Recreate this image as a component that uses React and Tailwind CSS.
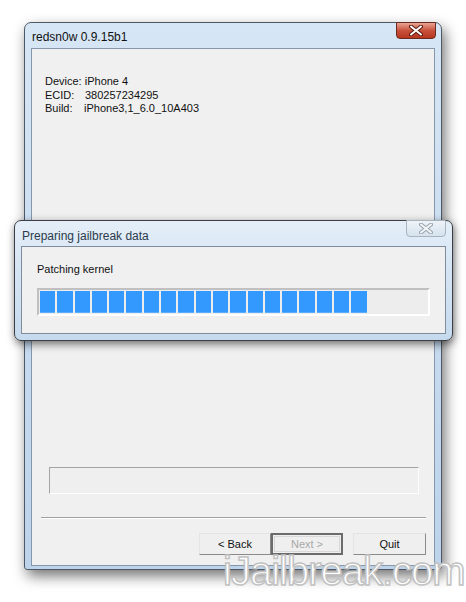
const blocks = Array.from({ length: 19 });

function CloseGlyph({ color, stroke }) {
  return (
    <svg width="14" height="11" viewBox="0 0 14 11">
      <path
        d="M2 1.5 L12 9.5 M12 1.5 L2 9.5"
        stroke={stroke}
        strokeWidth="4"
        strokeLinecap="round"
        fill="none"
      />
      <path
        d="M2 1.5 L12 9.5 M12 1.5 L2 9.5"
        stroke={color}
        strokeWidth="2"
        strokeLinecap="round"
        fill="none"
      />
    </svg>
  );
}

function Button({ children, primary, disabled }) {
  return (
    <div
      className={`flex items-center justify-center h-[22px] text-[11px] ${
        primary
          ? "border-2 border-[#6b6b6b] outline outline-1 outline-[#d8d8d8] -outline-offset-4"
          : "border border-t-[#e4e4e4] border-l-[#e4e4e4] border-r-[#8a8a8a] border-b-[#8a8a8a]"
      } ${disabled ? "text-[#a8a8a8]" : "text-[#111]"} bg-[#efefef]`}
    >
      {children}
    </div>
  );
}

export default function App() {
  return (
    <div
      className="relative w-[466px] h-[602px] bg-white overflow-hidden"
      style={{ fontFamily: '"Liberation Sans", "DejaVu Sans", sans-serif' }}
    >
      {/* main wizard window */}
      <div className="absolute left-[24px] top-[22px] w-[418px] h-[548px] rounded-t-[7px] rounded-b-[3px] border border-[#4d5866] bg-gradient-to-b from-[#d7e6f5] via-[#c8dcf0] to-[#bcd3ea] shadow-[3px_6px_14px_rgba(0,0,0,0.55)] flex flex-col">
        <div className="flex h-[25px] items-start">
          <div className="pl-[7px] pt-[5px] text-[12px] text-[#111] flex-1">redsn0w 0.9.15b1</div>
          <div className="mr-[5px] mt-[-1px] w-[40px] h-[17px] rounded-b-[4px] border border-[#6b2a20] bg-gradient-to-b from-[#e8a393] via-[#c8513c] to-[#b8361f] flex items-center justify-center">
            <CloseGlyph color="#ffffff" stroke="#5a1a10" />
          </div>
        </div>
        <div className="mx-[6px] mb-[3px] flex-1 border border-[#8797aa] bg-[#f0f0f0] flex flex-col text-[11px] text-[#111]">
          <div className="pl-[13px] pt-[26px] leading-[13.5px]">
            <div>Device: iPhone 4</div>
            <div>
              <span className="inline-block w-[40px]">ECID:</span>380257234295
            </div>
            <div>
              <span className="inline-block w-[39px]">Build:</span>iPhone3,1_6.0_10A403
            </div>
          </div>
          <div className="flex-1" />
          <div className="ml-[17px] w-[370px] h-[27px] border border-t-[#a4a4a4] border-l-[#a4a4a4] border-r-[#fdfdfd] border-b-[#fdfdfd] bg-[#efefef]" />
          <div className="ml-[9px] mt-[23px] w-[385px] h-[2px] border-t border-t-[#a0a0a0] border-b border-b-[#ffffff]" />
          <div className="flex mt-[14px] mb-[10px] pl-[167px]">
            <div className="w-[72px]">
              <Button>&lt; Back</Button>
            </div>
            <div className="w-[72px]">
              <Button primary disabled>
                Next &gt;
              </Button>
            </div>
            <div className="w-[73px] ml-[10px]">
              <Button>Quit</Button>
            </div>
          </div>
        </div>
      </div>

      {/* progress dialog */}
      <div className="absolute left-[14px] top-[220px] w-[439px] h-[121px] rounded-[7px] border border-[#3b3f45] bg-gradient-to-b from-[#e4eef8] via-[#d3e3f3] to-[#c6daee] shadow-[1px_3px_8px_rgba(0,0,0,0.55)] flex flex-col">
        <div className="flex h-[25px] items-start">
          <div className="pl-[7px] pt-[6px] text-[12px] text-[#2b3b4b] flex-1">Preparing jailbreak data</div>
          <div className="mr-[6px] mt-[-1px] w-[40px] h-[17px] rounded-b-[4px] border border-[#a7b3bf] bg-gradient-to-b from-[#eef3f8] to-[#d6e2ee] flex items-center justify-center">
            <CloseGlyph color="#f4f6f8" stroke="#9aa4ae" />
          </div>
        </div>
        <div className="mx-[6px] mb-[6px] flex-1 border border-[#7e8c9c] bg-[#f0f0f0] flex flex-col">
          <div className="pl-[15px] pt-[16px] text-[11px] text-[#111] leading-[13px]">Patching kernel</div>
          <div className="ml-[15px] mt-[12px] w-[393px] h-[28px] border-2 border-t-[#c0c0c0] border-l-[#c0c0c0] border-r-[#ffffff] border-b-[#ffffff] bg-[#ededed] flex gap-[2px] pl-[1px] pt-[1px] pb-[1px]">
            {blocks.map((_, i) => (
              <div key={i} className="w-[15.3px] h-full bg-[#3399ff] border-b border-b-[#5aaeff]" />
            ))}
          </div>
        </div>
      </div>

      {/* watermark */}
      <div
        className="absolute left-[223px] top-[551px] text-[40px] leading-none tracking-[-1px] text-white [-webkit-text-stroke:1.5px_#c2c2c2]"
        style={{ fontFamily: '"Liberation Sans", Arial, sans-serif' }}
      >
        iJailbreak.com
      </div>
    </div>
  );
}
